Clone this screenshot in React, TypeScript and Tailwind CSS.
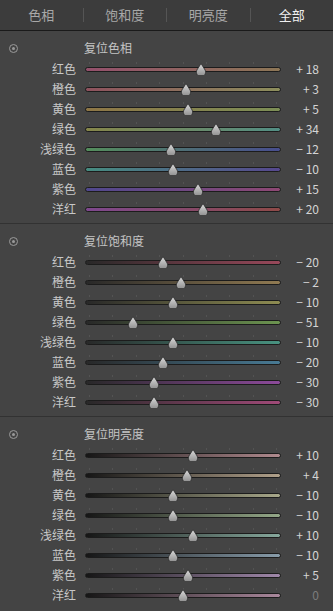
import React from 'react'

type Row = { label: string; value: number; from: string; to: string }

const FONT = { fontFamily: '"Noto Sans CJK SC", "Noto Sans", sans-serif' }

const HUE: Row[] = [
    { label: '红色', value: 18, from: '#94506c', to: '#8c7656' },
    { label: '橙色', value: 3, from: '#8e525e', to: '#8c8e5c' },
    { label: '黄色', value: 5, from: '#8e7646', to: '#7c8e56' },
    { label: '绿色', value: 34, from: '#86864a', to: '#528e84' },
    { label: '浅绿色', value: -12, from: '#548e5c', to: '#484e8e' },
    { label: '蓝色', value: -10, from: '#468c80', to: '#56488e' },
    { label: '紫色', value: 15, from: '#50488e', to: '#8e4874' },
    { label: '洋红', value: 20, from: '#7e488e', to: '#8e4a48' },
]

const SAT: Row[] = [
    { label: '红色', value: -20, from: '#282828', to: '#98485a' },
    { label: '橙色', value: -2, from: '#282828', to: '#907a52' },
    { label: '黄色', value: -10, from: '#282828', to: '#8e8c52' },
    { label: '绿色', value: -51, from: '#282828', to: '#6c9450' },
    { label: '浅绿色', value: -10, from: '#282828', to: '#489280' },
    { label: '蓝色', value: -20, from: '#282828', to: '#487a94' },
    { label: '紫色', value: -30, from: '#282828', to: '#8c4a9a' },
    { label: '洋红', value: -30, from: '#282828', to: '#a04a78' },
]

const LUM: Row[] = [
    { label: '红色', value: 10, from: '#161616', to: '#b08a8e' },
    { label: '橙色', value: 4, from: '#161616', to: '#b0a08a' },
    { label: '黄色', value: -10, from: '#161616', to: '#a8a88a' },
    { label: '绿色', value: -10, from: '#161616', to: '#94a888' },
    { label: '浅绿色', value: 10, from: '#161616', to: '#86a89c' },
    { label: '蓝色', value: -10, from: '#161616', to: '#889caa' },
    { label: '紫色', value: 5, from: '#161616', to: '#a088aa' },
    { label: '洋红', value: 0, from: '#161616', to: '#aa889c' },
]

function fmt(v: number) {
    if (v === 0) return '0'
    return (v > 0 ? '+ ' : '− ') + Math.abs(v)
}

function Thumb() {
    return (
        <svg width="11" height="12" viewBox="0 0 11 12">
            <defs>
                <linearGradient id="tg" x1="0" y1="0" x2="0" y2="1">
                    <stop offset="0" stopColor="#dcdcdc" />
                    <stop offset="1" stopColor="#8a8a8a" />
                </linearGradient>
            </defs>
            <path d="M5.5 0.5 L9.6 7 A4.6 4.6 0 1 1 1.4 7 Z" fill="url(#tg)" stroke="#2a2a2a" strokeWidth="0.8" />
        </svg>
    )
}

function Slider({ row }: { row: Row }) {
    const pos = 50 + row.value / 2
    return (
        <div className="relative h-[20px] w-[196px] flex items-center">
            <div className="absolute left-[4px] right-[4px] top-[3px] flex justify-between">
                {Array.from({ length: 9 }).map((_, i) => (
                    <span key={i} className="w-px h-[2px] bg-[#535353]" />
                ))}
            </div>
            <div
                className="w-full h-[5px] rounded-full border border-[#1c1c1c]"
                style={{ background: `linear-gradient(to right, ${row.from}, ${row.to})` }}
            />
            <div className="absolute top-[4px] -translate-x-1/2" style={{ left: `${pos}%` }}>
                <Thumb />
            </div>
        </div>
    )
}

function Section({ title, rows, last }: { title: string; rows: Row[]; last?: boolean }) {
    return (
        <div className={`pt-[6px] pb-[4px] ${last ? '' : 'border-b border-[#323232]'}`}>
            <div className="h-[22px] flex items-center">
                <div className="w-[84px] pl-[9px]">
                    <span className="flex w-[9px] h-[9px] rounded-full border border-[#9a9a9a] items-center justify-center">
                        <span className="w-[3px] h-[3px] rounded-full bg-[#9a9a9a]" />
                    </span>
                </div>
                <span className="text-[12px] text-[#c4c4c4]">{title}</span>
            </div>
            {rows.map(r => (
                <div key={r.label} className="h-[20px] flex items-center">
                    <span className="w-[76px] text-right text-[12px] leading-none text-[#c8c8c8]">{r.label}</span>
                    <div className="ml-[9px]">
                        <Slider row={r} />
                    </div>
                    <span
                        className={`w-[38px] text-right text-[12px] leading-none ${r.value === 0 ? 'text-[#7c7c7c]' : 'text-[#d4d4d4]'}`}
                    >
                        {fmt(r.value)}
                    </span>
                </div>
            ))}
        </div>
    )
}

export default function App() {
    const tabs = ['色相', '饱和度', '明亮度', '全部']
    return (
        <div className="w-[333px] h-[611px] bg-[#444444] overflow-hidden" style={FONT}>
            {/* Tabs */}
            <div className="h-[31px] bg-[#3c3c3c] border-b border-[#1a1a1a] flex items-center">
                {tabs.map((t, i) => (
                    <React.Fragment key={t}>
                        {i > 0 && <span className="w-px h-[14px] bg-[#555555]" />}
                        <span
                            className={`flex-1 text-center text-[13px] ${i === 3 ? 'text-[#f0f0f0]' : 'text-[#a8a8a8]'}`}
                        >
                            {t}
                        </span>
                    </React.Fragment>
                ))}
            </div>
            <Section title="复位色相" rows={HUE} />
            <Section title="复位饱和度" rows={SAT} />
            <Section title="复位明亮度" rows={LUM} last />
        </div>
    )
}
